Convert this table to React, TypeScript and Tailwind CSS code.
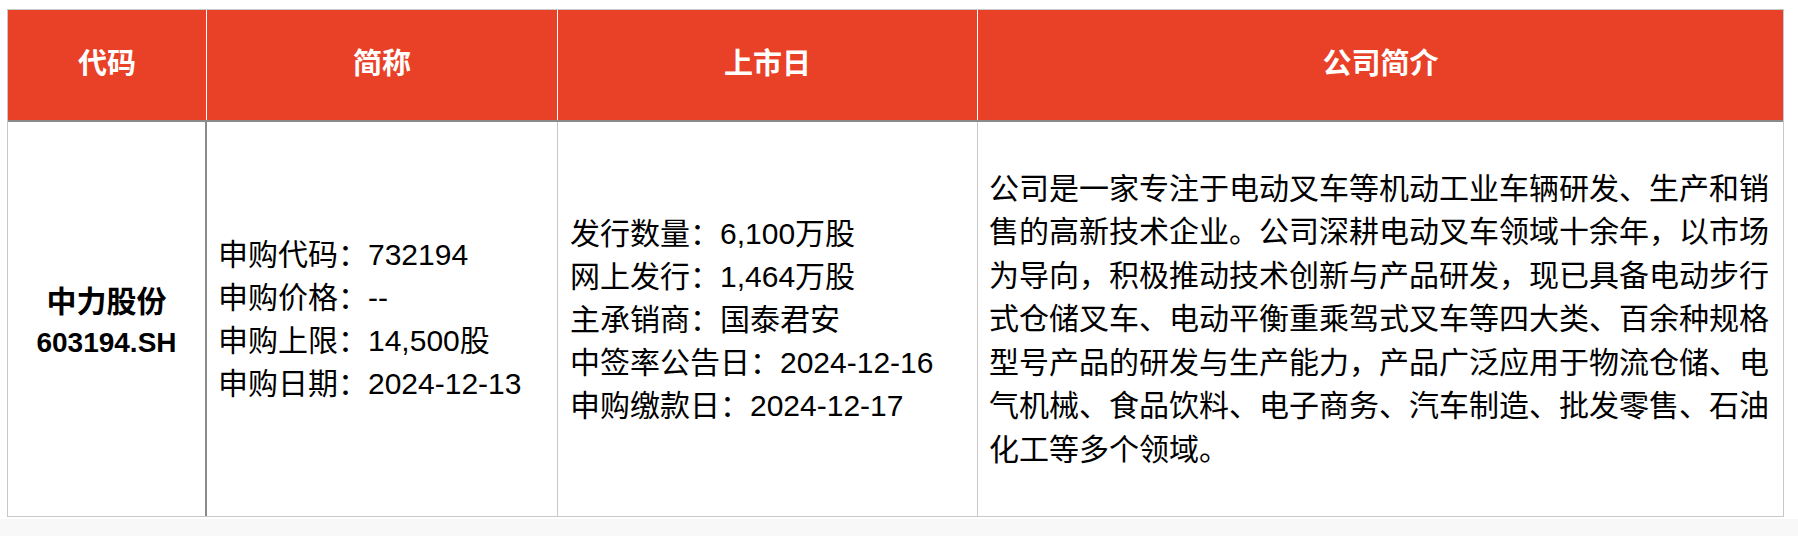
import React from "react";

const font = { fontFamily: '"Liberation Sans", "Noto Sans CJK SC", sans-serif' };

export default function App() {
  const col2 = ["申购代码：732194", "申购价格：--", "申购上限：14,500股", "申购日期：2024-12-13"];
  const col3 = [
    "发行数量：6,100万股",
    "网上发行：1,464万股",
    "主承销商：国泰君安",
    "中签率公告日：2024-12-16",
    "申购缴款日：2024-12-17",
  ];
  const desc =
    "公司是一家专注于电动叉车等机动工业车辆研发、生产和销售的高新技术企业。公司深耕电动叉车领域十余年，以市场为导向，积极推动技术创新与产品研发，现已具备电动步行式仓储叉车、电动平衡重乘驾式叉车等四大类、百余种规格型号产品的研发与生产能力，产品广泛应用于物流仓储、电气机械、食品饮料、电子商务、汽车制造、批发零售、石油化工等多个领域。";

  return (
    <div className="w-[1798px] h-[536px] bg-white flex flex-col" style={font}>
      <div className="pt-[9px] pl-[7px] bg-white">
        <div className="w-[1777px] border border-[#c8c8c8]">
          <div className="grid grid-cols-[199px_351px_420px_805px] h-[112px] bg-[#e94128] border-b-2 border-[#8a8a8a] text-white font-bold text-[29px]">
            <div className="flex items-center justify-center border-r border-white">代码</div>
            <div className="flex items-center justify-center border-r border-white">简称</div>
            <div className="flex items-center justify-center border-r border-white">上市日</div>
            <div className="flex items-center justify-center">公司简介</div>
          </div>
          <div className="grid grid-cols-[199px_351px_420px_805px] h-[394px] text-black text-[30px] leading-[43px]">
            <div className="flex flex-col items-center justify-center pt-[6px] border-r-2 border-[#8a8a8a] font-bold leading-[41px]">
              <div className="text-[30px]">中力股份</div>
              <div className="text-[28px]">603194.SH</div>
            </div>
            <div className="flex flex-col justify-center pl-[11px] border-r border-[#c8c8c8]">
              {col2.map((t) => (
                <div key={t} className="whitespace-nowrap">{t}</div>
              ))}
            </div>
            <div className="flex flex-col justify-center pl-[12px] border-r border-[#c8c8c8]">
              {col3.map((t) => (
                <div key={t} className="whitespace-nowrap">{t}</div>
              ))}
            </div>
            <div className="flex items-center pl-[11px] pr-[10px]">
              <p className="leading-[43.5px]">{desc}</p>
            </div>
          </div>
        </div>
      </div>
      <div className="flex-1 mt-[2px] bg-[#f8f8f8]"></div>
    </div>
  );
}
